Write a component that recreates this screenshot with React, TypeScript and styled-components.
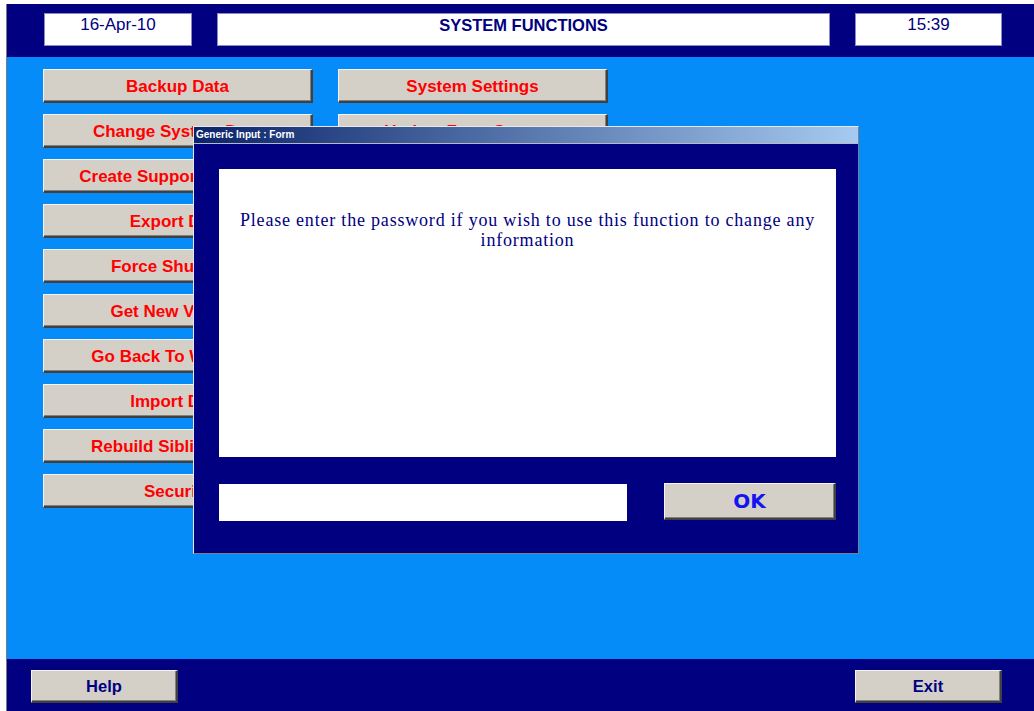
import React from 'react';
import styled, { createGlobalStyle } from 'styled-components';

const NAVY = '#000080';
const FACE = '#d4d0c8';

const GlobalStyle = createGlobalStyle`
  html, body {
    margin: 0;
    padding: 0;
    background: #ffffff;
    overflow: hidden;
  }
  body {
    font-family: 'Liberation Sans', Arial, sans-serif;
  }
`;

const Page = styled.div`
  width: 1034px;
  height: 711px;
  padding: 4px 0 0 6px;
  box-sizing: border-box;
`;

const Screen = styled.div`
  height: 707px;
  border-left: 1px solid #7a7a7a;
  display: flex;
  flex-direction: column;
`;

const TopBar = styled.div`
  height: 53px;
  background: ${NAVY};
  display: flex;
  align-items: flex-start;
  padding: 9px 0 0 37px;
  box-sizing: border-box;
  gap: 25px;
`;

const InfoBox = styled.div<{ $w: number; $bold?: boolean }>`
  width: ${p => p.$w}px;
  height: 33px;
  box-sizing: border-box;
  background: #ffffff;
  border: 1px solid #8a8ac4;
  color: ${NAVY};
  font-size: ${p => (p.$bold ? 16.5 : 17)}px;
  font-weight: ${p => (p.$bold ? 700 : 400)};
  text-align: center;
  padding-top: 2px;
  line-height: 18px;
`;

const Main = styled.div`
  flex: 1;
  position: relative;
  background: #058cf9;
  padding: 12px 0 0 36px;
`;

const Grid = styled.div`
  display: grid;
  grid-template-columns: 270px 270px;
  grid-auto-rows: 34px;
  column-gap: 25px;
  row-gap: 11px;
`;

const Bevel = styled.div`
  box-sizing: border-box;
  background: ${FACE};
  border-top: 1px solid #f4f4f4;
  border-left: 1px solid #f4f4f4;
  border-right: 2px solid #404040;
  border-bottom: 2px solid #404040;
  box-shadow: inset -1px -1px 0 #808080;
  display: flex;
  align-items: center;
  justify-content: center;
  font-weight: 700;
  white-space: nowrap;
  overflow: hidden;
`;

const FunctionButton = styled(Bevel)`
  color: #ff0000;
  font-size: 17px;
  padding-top: 2px;
`;

const Dialog = styled.div`
  position: absolute;
  left: 186px;
  top: 69px;
  width: 666px;
  height: 428px;
  box-sizing: border-box;
  border: 1px solid #e8e8e8;
  border-right-color: #808080;
  border-bottom-color: #808080;
  background: ${NAVY};
  display: flex;
  flex-direction: column;
`;

const TitleBar = styled.div`
  height: 16px;
  background: linear-gradient(to right, #0a246a, #a6caf0);
  border-bottom: 1px solid #b8b8c8;
  color: #ffffff;
  font-family: 'Liberation Sans', Tahoma, sans-serif;
  font-size: 10px;
  font-weight: 700;
  line-height: 16px;
  padding-left: 2px;
`;

const DialogBody = styled.div`
  flex: 1;
  padding: 25px 21px 0 25px;
  display: flex;
  flex-direction: column;
`;

const Message = styled.div`
  width: 617px;
  height: 288px;
  box-sizing: border-box;
  background: #ffffff;
  padding: 41px 14px 0;
  color: ${NAVY};
  font-family: 'Liberation Serif', 'Times New Roman', serif;
  font-size: 18px;
  letter-spacing: 0.8px;
  line-height: 20px;
  text-align: center;
`;

const InputRow = styled.div`
  margin-top: 26px;
  width: 617px;
  display: flex;
  justify-content: space-between;
  align-items: flex-start;
`;

const PasswordField = styled.input`
  width: 408px;
  height: 37px;
  box-sizing: border-box;
  border: none;
  background: #ffffff;
  margin-top: 1px;
  outline: none;
`;

const OkButton = styled(Bevel)`
  width: 172px;
  height: 37px;
  color: #1414f0;
  font-family: 'DejaVu Sans', Verdana, sans-serif;
  font-size: 20px;
`;

const BottomBar = styled.div`
  height: 52px;
  background: ${NAVY};
  display: flex;
  justify-content: space-between;
  align-items: flex-start;
  padding: 11px 32px 0 24px;
  box-sizing: border-box;
`;

const NavButton = styled(Bevel)`
  width: 147px;
  height: 33px;
  color: ${NAVY};
  font-size: 16.5px;
  padding-top: 1px;
`;

const functions: [string, string][] = [
  ['Backup Data', 'System Settings'],
  ['Change System Date', 'Update Form Sources'],
  ['Create Support Package', ''],
  ['Export Data', ''],
  ['Force Shutdown', ''],
  ['Get New Version', ''],
  ['Go Back To Windows', ''],
  ['Import Data', ''],
  ['Rebuild Sibling Links', ''],
  ['Security', ''],
];

export default function App() {
  return (
    <Page>
      <GlobalStyle />
      <Screen>
        <TopBar>
          <InfoBox $w={148}>16-Apr-10</InfoBox>
          <InfoBox $w={613} $bold>SYSTEM FUNCTIONS</InfoBox>
          <InfoBox $w={147}>15:39</InfoBox>
        </TopBar>
        <Main>
          <Grid>
            {functions.map(([left, right]) => (
              <React.Fragment key={left}>
                <FunctionButton>{left}</FunctionButton>
                {right ? <FunctionButton>{right}</FunctionButton> : <div />}
              </React.Fragment>
            ))}
          </Grid>
          <Dialog>
            <TitleBar>Generic Input : Form</TitleBar>
            <DialogBody>
              <Message>
                Please enter the password if you wish to use this function to change any information
              </Message>
              <InputRow>
                <PasswordField type="password" />
                <OkButton>OK</OkButton>
              </InputRow>
            </DialogBody>
          </Dialog>
        </Main>
        <BottomBar>
          <NavButton>Help</NavButton>
          <NavButton>Exit</NavButton>
        </BottomBar>
      </Screen>
    </Page>
  );
}
